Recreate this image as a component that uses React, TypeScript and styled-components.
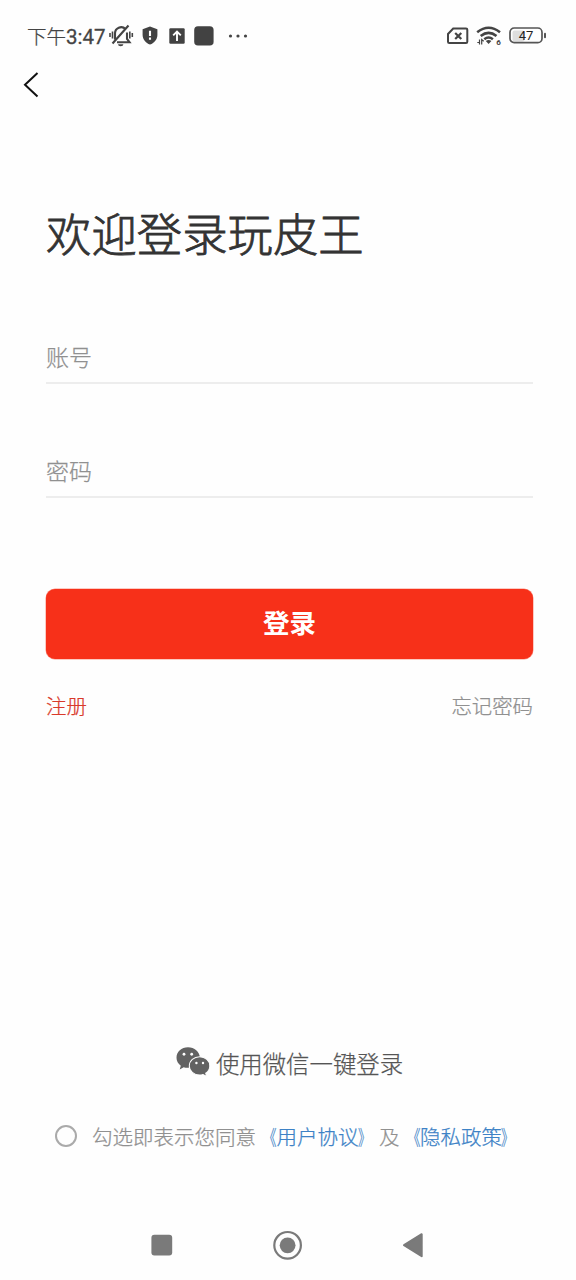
import React from 'react';
import styled, { createGlobalStyle } from 'styled-components';

const GlobalStyle = createGlobalStyle`
  * { box-sizing: border-box; }
  body {
    margin: 0;
    background: #fefefe;
    font-family: "Noto Sans CJK SC", sans-serif;
    font-weight: 300;
    -webkit-text-stroke: 0.25px currentColor;
  }
  svg { display: block; flex: none; -webkit-text-stroke: 0; }
`;

const Screen = styled.div`
  width: 576px;
  height: 1280px;
  display: flex;
  flex-direction: column;
  overflow: hidden;
`;

const StatusBar = styled.header`
  height: 70px;
  padding: 1px 29px 0 27px;
  display: flex;
  align-items: center;
  justify-content: space-between;
`;

const StatusGroup = styled.div`
  display: flex;
  align-items: center;
`;

const Clock = styled.span`
  width: 82px;
  font-size: 19.5px;
  line-height: 30px;
  color: #444;
  white-space: nowrap;
  padding-top: 1px;
`;

const Digits = styled.span`
  font-family: Roboto, sans-serif;
  font-size: 20.5px;
  font-weight: 400;
  -webkit-text-stroke: 0.3px #444;
`;

const IconSlot = styled.span<{ $gap: number }>`
  margin-left: ${(p) => p.$gap}px;
`;

const NavBar = styled.nav`
  height: 30px;
  padding: 1px 0 0 22px;
`;

const BackButton = styled.button`
  display: block;
  border: 0;
  padding: 0;
  background: none;
`;

const Content = styled.main`
  flex: 1;
  display: flex;
  flex-direction: column;
  padding: 102px 43px 0 46px;
`;

const Title = styled.h1`
  margin: 0;
  font-size: 45.4px;
  line-height: 60px;
  font-weight: 300;
  -webkit-text-stroke: 0.8px currentColor;
  color: #333;
`;

const Form = styled.form`
  display: flex;
  flex-direction: column;
  padding-top: 70px;
`;

const Field = styled.label`
  height: 52px;
  margin-bottom: 62px;
  border-bottom: 2px solid #ededed;
  font-size: 23px;
  line-height: 49px;
  color: #909090;
`;

const LoginButton = styled.button`
  height: 70px;
  margin-top: 29px;
  padding: 0 0 5px;
  border: 0;
  border-radius: 9px;
  background: #f73019;
  box-shadow: 0 0 0 0.5px #fa9588;
  color: #fff;
  font: 700 26.5px/40px "Noto Sans CJK SC", sans-serif;
  -webkit-text-stroke: 0;
`;

const LinkRow = styled.div`
  display: flex;
  justify-content: space-between;
  padding-top: 31px;
  font-size: 20.4px;
  line-height: 30px;
`;

const TextLink = styled.a<{ $color: string }>`
  color: ${(p) => p.$color};
`;

const Bracket = styled.span<{ $side: 'left' | 'right' }>`
  display: inline-block;
  transform: ${(p) => (p.$side === 'left' ? 'scaleX(0.66)' : 'translateX(-1px) scaleX(0.62)')};
  transform-origin: ${(p) => (p.$side === 'left' ? 'right' : 'left')} center;
`;

const WechatLogin = styled.div`
  display: flex;
  align-items: center;
  align-self: center;
  margin-top: auto;
  gap: 6px;
  height: 36px;
  font-size: 23.4px;
  line-height: 36px;
  color: #555;
  white-space: nowrap;
`;

const Agreement = styled.div`
  display: flex;
  align-items: center;
  height: 30px;
  margin: 40px -10px 59px 9px;
  font-size: 20.5px;
  line-height: 30px;
  color: #909090;
  white-space: nowrap;
`;

const Radio = styled.span`
  width: 22px;
  height: 22px;
  margin-right: 15px;
  border: 2px solid #aaa;
  border-radius: 50%;
`;

const SystemNav = styled.footer`
  height: 70px;
  display: flex;
  align-items: center;
  justify-content: space-between;
  padding: 0 152px 0 151px;
`;

const MutedBell = () => (
  <svg width="26" height="24" viewBox="0 0 26 24" fill="none" stroke="#444" strokeWidth="2.1">
    <path d="M7 15.5V9.5a6.2 6.2 0 0 1 10.5-4.5M19 8.5v6.5l2.5 3.2H9M4.5 19.5 20.5 1.5" />
    <path d="M10 20.3h5.4a2.7 2 0 0 1-5.4 0Z" fill="#444" stroke="none" />
    <path d="M2 9v4M4.5 7.5v7M21.8 7.5v7M24.3 9v4" strokeWidth="1.6" />
  </svg>
);

const Shield = () => (
  <svg width="16" height="20" viewBox="0 0 16 20">
    <path d="M8 .5 15.4 3.3V8.7c0 4.7-3.1 8.3-7.4 9.8C3.7 17 .6 13.4.6 8.7V3.3Z" fill="#424242" />
    <path d="M8 4.7v5.2M8 11.6v2.2" stroke="#fff" strokeWidth="2.1" />
  </svg>
);

const Upload = () => (
  <svg width="16" height="16" viewBox="0 0 16 16">
    <rect x=".3" y=".3" width="15.4" height="15.4" rx="1.2" fill="#424242" />
    <path d="M8 13V3.6M4.2 7.3 8 3.5l3.8 3.8" fill="none" stroke="#fff" strokeWidth="1.9" />
  </svg>
);

const AppSquare = () => (
  <svg width="20" height="20" viewBox="0 0 20 20">
    <rect x=".2" y=".2" width="19.4" height="19.4" rx="3.8" fill="#424242" />
  </svg>
);

const Dots = () => (
  <svg width="20" height="4" viewBox="0 0 20 4" fill="#444">
    <circle cx="2.5" cy="2" r="1.6" />
    <circle cx="10" cy="2" r="1.6" />
    <circle cx="17.5" cy="2" r="1.6" />
  </svg>
);

const SimMissing = () => (
  <svg width="22" height="18" viewBox="0 0 22 18" fill="none" stroke="#444">
    <path d="M6.2 1.5H19a1.3 1.3 0 0 1 1.3 1.3v12A1.3 1.3 0 0 1 19 16.1H2.3A1.3 1.3 0 0 1 1 14.8V7Z" strokeWidth="2" />
    <path d="m8.2 6 6.1 6M14.3 6l-6.1 6" strokeWidth="2.2" />
  </svg>
);

const SmallDigit = styled.text`
  font: 700 8px Roboto, sans-serif;
`;

const BatteryValue = styled.text`
  font: 400 13px Roboto, sans-serif;
`;

const Wifi = () => (
  <svg width="26" height="22" viewBox="0 0 26 22" fill="none" stroke="#444">
    <path d="M1.2 7.2Q12.6-1.7 24 7.2" strokeWidth="2.6" />
    <path d="M4.7 10.9q7.9-6.2 15.8 0" strokeWidth="2.6" />
    <path d="M8.3 14.3q4.3-3.5 8.6 0" strokeWidth="2.5" />
    <path d="m9.8 16 2.8 3 2.8-3q-2.8-1.8-5.6 0Z" fill="#444" stroke="none" />
    <path d="M3.5 14.5v5M1.3 17.5h2.8M5.7 19.5v-5l2 1.8" strokeWidth="1.2" />
    <SmallDigit x="20.2" y="20" fill="#444" stroke="none">6</SmallDigit>
  </svg>
);

const Battery = () => (
  <svg width="38" height="18" viewBox="0 0 38 18">
    <rect x="3.5" y="3.5" width="12" height="11" rx="2" fill="#dedede" />
    <rect x="1" y="1" width="32" height="14.6" rx="4.2" fill="none" stroke="#555" strokeWidth="1.7" />
    <rect x="35" y="5.7" width="2" height="5.5" rx="1" fill="#555" />
    <BatteryValue x="17" y="13" textAnchor="middle" fill="#222">47</BatteryValue>
  </svg>
);

const Back = () => (
  <svg width="18" height="28" viewBox="0 0 18 28" fill="none">
    <path d="M15.5 2 3 13.8 15.5 25.5" stroke="#111" strokeWidth="2" />
  </svg>
);

const Wechat = () => (
  <svg width="34" height="32" viewBox="0 0 34 30" preserveAspectRatio="none">
    <path d="M12 .2C5.5.2.5 4.5.5 10c0 3 1.6 5.500 4.300 7.500L3.700 21l4-2.100c1.400.4 2.900.6 4.500.5C17.500 19 24 15 24 10 23.500 4.300 18.500.2 12 .2Z" fill="#626262" />
    <path d="M23.600 9.100c-5.700 0-10.300 3.800-10.300 8.600s4.600 8.600 10.300 8.600c1.200 0 2.300-.2 3.400-.5l3.700 1.900-1-3.200c2.500-1.600 4.100-3.900 4.100-6.800 0-4.800-4.500-8.600-10.200-8.600Z" fill="#626262" stroke="#fefefe" strokeWidth="1" />
    <g fill="#fefefe">
      <circle cx="8" cy="6.800" r="1.400" />
      <circle cx="15.700" cy="6.800" r="1.400" />
      <circle cx="20.400" cy="15" r="1.200" />
      <circle cx="27" cy="15" r="1.200" />
    </g>
  </svg>
);

const Recents = () => (
  <svg width="22" height="22" viewBox="0 0 22 22">
    <rect x=".4" y=".8" width="20.800" height="20.800" rx="3" fill="#7a7a7a" />
  </svg>
);

const Home = () => (
  <svg width="30" height="30" viewBox="0 0 30 30">
    <circle cx="14.600" cy="15.300" r="13.300" fill="none" stroke="#7a7a7a" strokeWidth="2.200" />
    <circle cx="14.600" cy="15.300" r="7.900" fill="#7a7a7a" />
  </svg>
);

const BackTriangle = () => (
  <svg width="22" height="26" viewBox="0 0 22 26">
    <path d="M2 13.200 19.700 2.200v22Z" fill="#7a7a7a" stroke="#7a7a7a" strokeWidth="2" strokeLinejoin="round" />
  </svg>
);

const PolicyLink = ({ name }: { name: string }) => (
  <TextLink $color="#3d82c6">
    <Bracket $side="left">《</Bracket>
    {name}
    <Bracket $side="right">》</Bracket>
  </TextLink>
);

const fields = ['账号', '密码'];

export default function App() {
  return (
    <Screen>
      <GlobalStyle />
      <StatusBar>
        <StatusGroup>
          <Clock>下午<Digits>3:47</Digits></Clock>
          <IconSlot $gap={-1}><MutedBell /></IconSlot>
          <IconSlot $gap={8}><Shield /></IconSlot>
          <IconSlot $gap={11}><Upload /></IconSlot>
          <IconSlot $gap={9}><AppSquare /></IconSlot>
          <IconSlot $gap={14}><Dots /></IconSlot>
        </StatusGroup>
        <StatusGroup>
          <SimMissing />
          <IconSlot $gap={7}><Wifi /></IconSlot>
          <IconSlot $gap={7}><Battery /></IconSlot>
        </StatusGroup>
      </StatusBar>
      <NavBar>
        <BackButton aria-label="返回"><Back /></BackButton>
      </NavBar>
      <Content>
        <Title>欢迎登录玩皮王</Title>
        <Form>
          {fields.map((name) => <Field key={name}>{name}</Field>)}
          <LoginButton type="button">登录</LoginButton>
        </Form>
        <LinkRow>
          <TextLink $color="#d93a2b">注册</TextLink>
          <TextLink $color="#909090">忘记密码</TextLink>
        </LinkRow>
        <WechatLogin>
          <Wechat />
          使用微信一键登录
        </WechatLogin>
        <Agreement>
          <Radio />
          勾选即表示您同意
          <PolicyLink name="用户协议" />
          及
          <PolicyLink name="隐私政策" />
        </Agreement>
      </Content>
      <SystemNav>
        <Recents />
        <Home />
        <BackTriangle />
      </SystemNav>
    </Screen>
  );
}
